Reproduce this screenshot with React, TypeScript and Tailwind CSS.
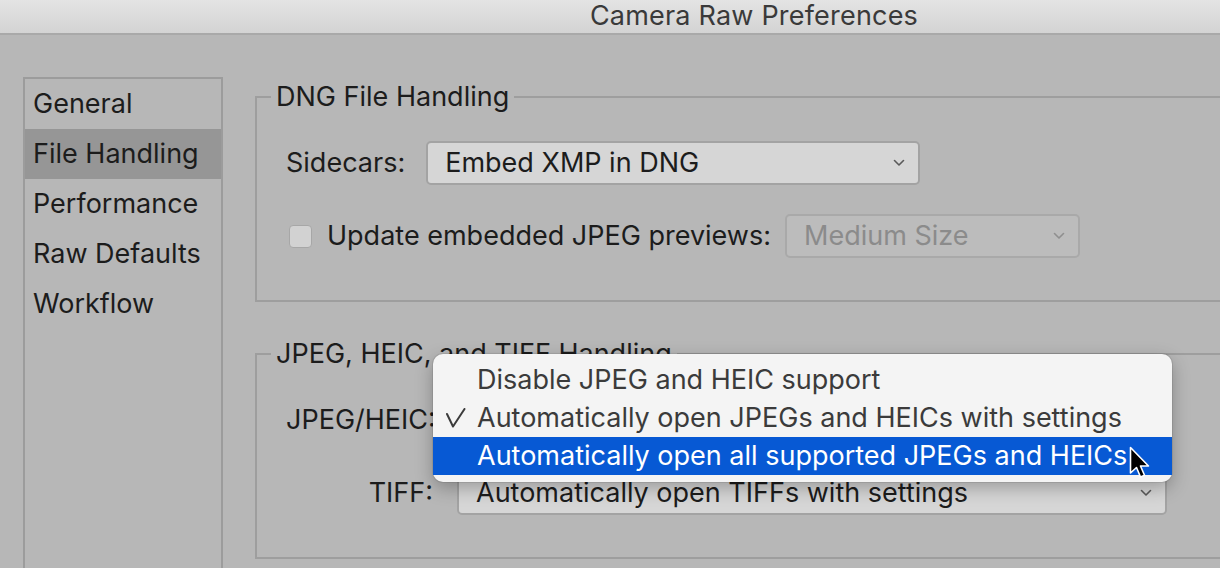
import React from "react";

const SIDEBAR = ["General", "File Handling", "Performance", "Raw Defaults", "Workflow"];

const MENU_ITEMS = [
  { label: "Disable JPEG and HEIC support", checked: false, active: false },
  { label: "Automatically open JPEGs and HEICs with settings", checked: true, active: false },
  { label: "Automatically open all supported JPEGs and HEICs", checked: false, active: true },
];

function Chevron({ muted }: { muted?: boolean }) {
  return (
    <svg width="12" height="8" viewBox="0 0 12 8" className="shrink-0">
      <polyline
        points="1.5,1.5 6,6 10.5,1.5"
        fill="none"
        stroke={muted ? "#8f8f8f" : "#5a5a5a"}
        strokeWidth="1.6"
        strokeLinecap="round"
        strokeLinejoin="round"
      />
    </svg>
  );
}

function Check() {
  return (
    <svg width="20" height="20" viewBox="0 0 20 20">
      <polyline
        points="1,6 7,18.5 18.5,1"
        fill="none"
        stroke="#3b3b3b"
        strokeWidth="2"
        strokeLinecap="round"
        strokeLinejoin="round"
      />
    </svg>
  );
}

function Select({
  value,
  width,
  disabled,
}: {
  value: string;
  width: string;
  disabled?: boolean;
}) {
  return (
    <div
      className={`${width} h-[44px] flex items-center justify-between pl-[17px] pr-[13px] rounded-[5px] border-2 ${
        disabled
          ? "bg-[#bcbcbc] border-[#a9a9a9] text-[#8b8b8b]"
          : "bg-[#d6d6d6] border-[#a3a3a3] text-[#1c1c1c]"
      }`}
    >
      <span className="whitespace-nowrap">{value}</span>
      <Chevron muted={disabled} />
    </div>
  );
}

function Cursor() {
  return (
    <svg width="24" height="36" viewBox="0 0 24 36">
      <path
        d="M1.5 1.5 L1.5 27 L7.5 21.5 L11.5 31 L15.5 29.3 L11.5 20 L19.5 20 Z"
        fill="#000"
        stroke="#fff"
        strokeWidth="1.6"
        strokeLinejoin="round"
      />
    </svg>
  );
}

export default function App() {
  return (
    <div
      className="relative w-[1220px] h-[568px] overflow-hidden bg-[#b7b7b7] text-[27px] text-[#1c1c1c]"
      style={{ fontFamily: "Inter, 'Liberation Sans', sans-serif" }}
    >
      {/* Title bar */}
      <div className="w-[1508px] h-[35px] flex items-center justify-center pb-[3px] bg-gradient-to-b from-[#e4e4e4] to-[#d3d3d3] border-b-2 border-[#a9a9a9]">
        <span className="text-[27px] text-[#3a3a3a] tracking-[0.2px] leading-none">
          Camera Raw Preferences
        </span>
      </div>

      <div className="flex pl-[23px] pt-[42px]">
        {/* Sidebar */}
        <div className="w-[200px] h-[600px] shrink-0 border-2 border-[#9c9c9c]">
          {SIDEBAR.map((item) => (
            <div
              key={item}
              className={`h-[50px] flex items-center pl-[8px] ${
                item === "File Handling" ? "bg-[#969696]" : ""
              }`}
            >
              {item}
            </div>
          ))}
        </div>

        {/* Content */}
        <div className="ml-[32px] pt-[4px] w-[1000px] shrink-0 flex flex-col">
          <fieldset className="border-2 border-[#9e9e9e] pt-[28px] pb-[42px]">
            <legend className="ml-[14px] px-[5px] leading-[32px]">DNG File Handling</legend>
            <div className="pl-[29px]">
              <div className="flex items-center gap-[21px]">
                <span>Sidecars:</span>
                <Select value="Embed XMP in DNG" width="w-[494px]" />
              </div>
              <div className="flex items-center mt-[29px]">
                <div className="w-[23px] h-[23px] ml-[3px] rounded-[4px] bg-[#d2d2d2] border border-[#a7a7a7]" />
                <span className="ml-[15px]">Update embedded JPEG previews:</span>
                <div className="ml-[14px]">
                  <Select value="Medium Size" width="w-[295px]" disabled />
                </div>
              </div>
            </div>
          </fieldset>

          <fieldset className="mt-[36px] border-2 border-[#9e9e9e] pt-[28px] pb-[42px]">
            <legend className="ml-[14px] px-[5px] leading-[32px]">JPEG, HEIC, and TIFF Handling</legend>
            <div className="pl-[29px] grid grid-cols-[147px_auto] gap-x-[24px] gap-y-[29px] items-center justify-start">
              <span className="text-right">JPEG/HEIC:</span>
              <Select value="Automatically open JPEGs and HEICs with settings" width="w-[710px]" />
              <span className="text-right">TIFF:</span>
              <Select value="Automatically open TIFFs with settings" width="w-[710px]" />
            </div>
          </fieldset>
        </div>
      </div>

      {/* Open popup menu */}
      <div className="absolute left-[433px] top-[354px] w-[739px] py-[7px] rounded-[10px] bg-[#f4f4f4] shadow-[0_6px_18px_rgba(0,0,0,0.28),0_0_0_1px_rgba(0,0,0,0.08)] text-[#3b3b3b]">
        {MENU_ITEMS.map((it) => (
          <div
            key={it.label}
            className={`h-[38px] flex items-center whitespace-nowrap ${
              it.active ? "bg-[#0759d4] text-white" : ""
            }`}
          >
            <span className="w-[44px] pl-[13px] flex items-center">{it.checked ? <Check /> : null}</span>
            <span>{it.label}</span>
          </div>
        ))}
      </div>

      <div className="absolute left-[1129px] top-[446px]">
        <Cursor />
      </div>
    </div>
  );
}
